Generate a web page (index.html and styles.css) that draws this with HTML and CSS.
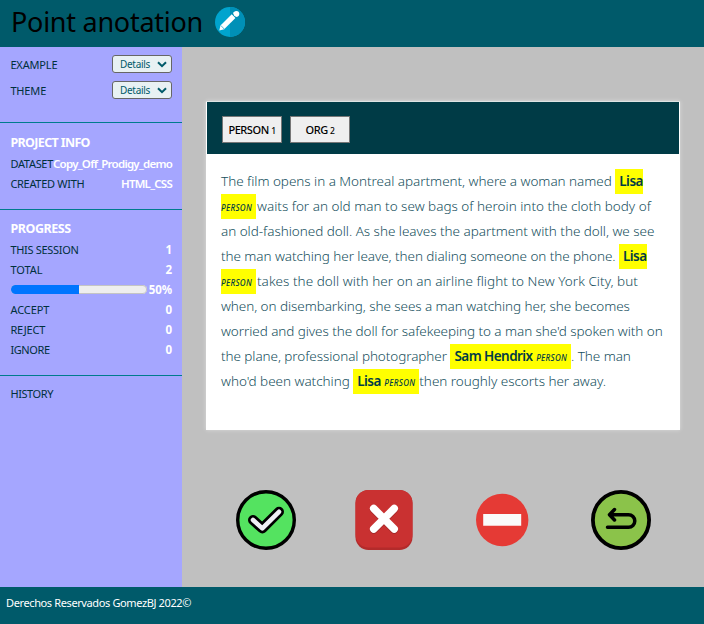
FILE: index.html
```html
<!DOCTYPE html>
<html lang="en">
<head>
<meta charset="utf-8">
<title>Point anotation</title>
<link rel="stylesheet" href="styles.css">
</head>
<body>
<header class="top">
  <h1>Point anotation</h1>
  <svg class="logo" viewBox="0 0 30 30"><circle cx="15" cy="15" r="15" fill="#00a4ce"/><path d="M15 0a15 15 0 0 1 0 30z" fill="#0090b7"/><path d="M4.3 23.4l1.2-5.2 3.9 4z" fill="#fff"/><path d="M7.3 20.4L18.6 9.2" stroke="#fff" stroke-width="5.2"/><path d="M19.9 7.9l.6-.6" stroke="#fff" stroke-width="5.6"/><circle cx="21.4" cy="6.8" r="2.9" fill="#fff"/><path d="M17.2 7l4.2 4.2" stroke="#0093ba" stroke-width=".6"/><path d="M5.8 18.4l3.6 3.8" stroke="#0097bf" stroke-width=".6"/></svg>
</header>
<div class="main">
  <aside class="side">
    <section class="menus">
      <div class="menu"><span class="snug">EXAMPLE</span><button class="select"><span>Details</span><svg viewBox="0 0 10 7"><path d="M1 1.2l4 4 4-4"/></svg></button></div>
      <div class="menu"><span class="snug">THEME</span><button class="select"><span>Details</span><svg viewBox="0 0 10 7"><path d="M1 1.2l4 4 4-4"/></svg></button></div>
    </section>
    <section class="info">
      <h2>PROJECT INFO</h2>
      <div class="row"><span class="tight">DATASET</span><b class="name">Copy_Off_Prodigy_demo</b></div>
      <div class="row"><span class="tight">CREATED WITH</span><b class="name">HTML_CSS</b></div>
    </section>
    <section class="stats">
      <h2>PROGRESS</h2>
      <div class="row"><span class="tight">THIS SESSION</span><b>1</b></div>
      <div class="row"><span>TOTAL</span><b>2</b></div>
      <div class="row"><div class="bar"><div class="fill" style="width:50%"></div></div><b>50%</b></div>
      <div class="row"><span>ACCEPT</span><b>0</b></div>
      <div class="row"><span class="snug">REJECT</span><b>0</b></div>
      <div class="row"><span class="tighter">IGNORE</span><b>0</b></div>
    </section>
    <section class="history"><div class="row"><span class="tighter">HISTORY</span></div></section>
  </aside>
  <main class="work">
    <article class="card">
      <div class="tags"><button class="tag">PERSON <small>1</small></button><button class="tag">ORG <small>2</small></button></div>
      <div class="text">
        <p><span>The film opens in a Montreal apartment, where a woman named</span><mark class="open"><b>Lisa</b></mark></p>
        <p><mark class="close"><i>PERSON</i></mark><span>waits for an old man to sew bags of heroin into the cloth body of</span></p>
        <p><span>an old-fashioned doll. As she leaves the apartment with the doll, we see</span></p>
        <p><span>the man watching her leave, then dialing someone on the phone.</span><mark class="open"><b>Lisa</b></mark></p>
        <p><mark class="close"><i>PERSON</i></mark><span>takes the doll with her on an airline flight to New York City, but</span></p>
        <p><span>when, on disembarking, she sees a man watching her, she becomes</span></p>
        <p><span>worried and gives the doll for safekeeping to a man she'd spoken with on</span></p>
        <p><span>the plane, professional photographer</span><mark class="open"><b>Sam Hendrix</b></mark><mark class="close"><i>PERSON</i></mark><span>. The man</span></p>
        <p><span>who'd been watching</span><mark class="open"><b>Lisa</b></mark><mark class="close"><i>PERSON</i></mark><span>then roughly escorts her away.</span></p>
      </div>
    </article>
    <div class="actions">
      <svg viewBox="0 0 60 60"><circle cx="30" cy="30" r="28.3" fill="#54e360" stroke="#000" stroke-width="3.4"/><path d="M17 30l9.3 8.4 16.7-16.6" class="tick-edge"/><path d="M17 30l9.3 8.4 16.7-16.6" class="tick"/></svg>
      <svg viewBox="0 0 60 60"><rect x="1.5" width="57" height="60" rx="13" fill="#b32b2b"/><rect x="1.5" width="57" height="57.5" rx="13" fill="#c93131"/><path d="M19.7 19.5l20.5 20.5M40.2 19.5l-20.5 20.5" class="cross-shade"/><path d="M19.7 18.5l20.5 20.5M40.2 18.5l-20.5 20.5" class="cross"/></svg>
      <svg viewBox="0 0 60 60"><circle cx="29.2" cy="30" r="26.2" fill="#e53a35"/><path d="M10.2 24h38v11.7h-38z" fill="#fafafa"/></svg>
      <svg viewBox="0 0 60 60"><circle cx="30" cy="30" r="28.1" fill="#8bc34a" stroke="#000" stroke-width="3.8"/><path d="M23.5 19.5L18.5 24.7l5 5.3M19 24.7h18.5a6.2 6.2 0 0 1 0 12.6H16.5" class="undo"/></svg>
    </div>
  </main>
</div>
<footer class="foot">Derechos Reservados GomezBJ 2022©</footer>
</body>
</html>
```
FILE: styles.css
```css
* { box-sizing: border-box; }
body { margin: 0; height: 624px; display: flex; flex-direction: column; font-family: "Noto Sans", sans-serif; overflow: hidden; }
.top { height: 47px; background: #005a6a; display: flex; align-items: center; padding: 0 0 4px 11px; gap: 12px; }
h1 { margin: 0; width: 192px; font-size: 27px; font-weight: 400; line-height: 40px; letter-spacing: -.259px; white-space: nowrap; }
.logo { width: 30px; height: 30px; }

/* Sidebar */
.main { display: flex; height: 540px; }
.side { width: 182px; background: #a5a6ff; color: #00303c; font-size: 11px; letter-spacing: -.06px; }
.side section { padding: 10px 10px 16px; border-bottom: 1px solid #007b8d; display: flex; flex-direction: column; }
.side .menus { height: 76px; padding-top: 4px; }
.side .stats { padding-top: 9px; }
.side .history { border: 0; padding-top: 7px; }
.menu { height: 26px; display: flex; justify-content: space-between; align-items: center; }
.select { width: 60px; height: 18px; border: 1px solid #666; border-radius: 3px; background: #e8f1f3; font: 10px "Noto Sans", sans-serif; letter-spacing: -.3px; color: #005a6a; padding: 0 4px 0 7px; display: flex; align-items: center; justify-content: space-between; }
.select svg { width: 10px; height: 7px; fill: none; stroke: #005a6a; stroke-width: 2; }
h2 { margin: 0; font-size: 12.5px; font-weight: 700; color: #fff; line-height: 20px; letter-spacing: -.65px; padding-left: .4px; }
.stats h2 { letter-spacing: -.45px; }
.row { height: 20px; display: flex; justify-content: space-between; align-items: center; white-space: nowrap; }
.row b { color: #fff; font-size: 11.5px; font-weight: 700; }
.row .name { font-weight: 600; letter-spacing: -.75px; }
.row span, .menu span { padding-left: .4px; }
.menu .select span { padding: 0; }
.snug { letter-spacing: -.15px; }
.tight { letter-spacing: -.3px; }
.tighter { letter-spacing: -.4px; }
.bar { width: 136px; height: 9px; margin-left: 1px; border-radius: 5px; background: #eee; box-shadow: inset 0 0 0 1px #c4c4c4; overflow: hidden; }
.fill { height: 100%; background: #0075ff; }

/* Annotation card */
.work { flex: 1; background: #c0c0c0; padding: 54px 24px 0; }
.card { background: #fff; height: 329px; padding: 1px; box-shadow: 0 0 4px rgba(255, 255, 255, .45), inset 0 1px #dde3e3; }
.tags { height: 52px; background: #003b46; display: flex; gap: 8px; padding: 14px 15px; }
.tag { width: 60px; height: 27px; font: 500 11px "Noto Sans", sans-serif; letter-spacing: -.45px; padding: 0; border: 1px solid #767676; background: #efefef; color: #000; }
.tag small { font-size: 8.5px; }
.text { padding: 15px 14px; color: #164f5d; font-size: 13.5px; font-weight: 350; }
p { margin: 0; height: 25px; line-height: 25px; white-space: nowrap; display: flex; letter-spacing: -.07px; }
p:nth-child(1), p:nth-child(3) { letter-spacing: -.035px; }
p:nth-child(2) { letter-spacing: 0; }
p:nth-child(5) { letter-spacing: .036px; }
p:nth-child(9) { letter-spacing: -.03px; }
mark { background: #ff0; color: #003b46; }
.open { padding-left: 4px; margin-left: 3.5px; }
.close { padding-right: 4px; }
.close + span { margin-left: 1px; }
.open + .close { padding-left: 3.5px; }
.open + .close + span { margin-left: 0; }
mark b { font-weight: 600; letter-spacing: -.55px; }
mark i { font-size: 8px; font-weight: 500; letter-spacing: .3px; }
.actions { width: 415px; margin: 60px 0 0 30px; display: flex; justify-content: space-between; }
.actions svg { width: 60px; height: 60px; fill: none; stroke-linecap: round; stroke-linejoin: round; }
.tick-edge { stroke: #000; stroke-width: 10; }
.tick { stroke: #f0eff5; stroke-width: 4.6; }
.cross { stroke: #fff; stroke-width: 7.5; }
.cross-shade { stroke: #a32a2a; stroke-width: 7.5; }
.undo { stroke: #000; stroke-width: 3.5; }
.foot { height: 37px; background: #005a6a; color: #fff; font-size: 11px; line-height: 32px; letter-spacing: -.38px; padding-left: 6px; }
```
